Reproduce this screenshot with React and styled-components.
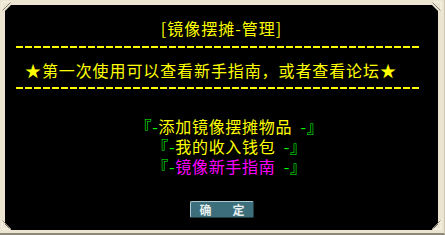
import React from "react";
import styled, { createGlobalStyle } from "styled-components";

const Global = createGlobalStyle`
  html, body { margin: 0; padding: 0; background: #e9e2ce; }
  #root { width: 445px; height: 235px; }
`;

const Frame = styled.div`
  position: relative;
  box-sizing: border-box;
  width: 445px;
  height: 235px;
  padding: 5px 6px 3px 5px;
  background: #ebe4d1;
  border-bottom: 2px solid #8c877a;
  border-right: 1px solid #cfc7b2;
`;

const Panel = styled.div`
  box-sizing: border-box;
  height: 100%;
  background: #000;
  display: flex;
  flex-direction: column;
  clip-path: polygon(6px 0, calc(100% - 6px) 0, 100% 6px, 100% calc(100% - 6px), calc(100% - 6px) 100%, 6px 100%, 0 calc(100% - 6px), 0 6px);
  font-family: "Noto Sans CJK SC", "Noto Sans", sans-serif;
  font-size: 16px;
  color: #ffff00;
`;

const Corner = styled.svg`
  position: absolute;
  width: 12px;
  height: 12px;
  ${(p) => (p.$top ? "top: 0;" : "bottom: 2px;")}
  ${(p) => (p.$left ? "left: 0;" : "right: 1px;")}
`;

const Title = styled.div`
  margin-top: 13px;
  height: 20px;
  line-height: 20px;
  text-align: center;
  letter-spacing: 1px;
`;

const Dashes = styled.div`
  margin: ${(p) => p.$mt}px 0 0 11px;
  width: 403px;
  height: 2px;
  background: repeating-linear-gradient(90deg, #ffff00 0 7px, transparent 7px 9px);
`;

const Notice = styled.div`
  margin-top: 12px;
  padding-left: 20px;
  height: 20px;
  line-height: 20px;
  letter-spacing: 0.9px;
  white-space: nowrap;
`;

const Menu = styled.div`
  margin-top: 27px;
  display: flex;
  flex-direction: column;
  align-items: center;
  padding-left: 16px;
`;

const MenuLine = styled.div`
  height: 20px;
  line-height: 20px;
  letter-spacing: 0.7px;
  white-space: pre;
  color: ${(p) => p.$color};
`;

const Mark = styled.span`
  color: #00ff00;
  padding-left: ${(p) => (p.$end ? 4 : 0)}px;
`;

const ButtonRow = styled.div`
  margin-top: 25px;
  display: flex;
  justify-content: center;
`;

const Button = styled.button`
  box-sizing: border-box;
  width: 64px;
  height: 17px;
  padding: 0 8px 0 9px;
  display: flex;
  justify-content: space-between;
  align-items: center;
  background: #3c6f7b;
  border: 1px solid #1e3c44;
  border-top-color: #a6cbd2;
  border-left-color: #a6cbd2;
  border-radius: 2px;
  color: #e6eeee;
  font-family: "Noto Sans CJK SC", sans-serif;
  font-size: 12px;
  font-weight: bold;
  line-height: 1;
  cursor: pointer;
`;

const items = [
  { text: "添加镜像摆摊物品", color: "#ffff00" },
  { text: "我的收入钱包", color: "#ffff00" },
  { text: "镜像新手指南", color: "#ff00ff" },
];

function CornerMark({ top, left }) {
  const rot = top ? (left ? 0 : 90) : left ? 270 : 180;
  return (
    <Corner $top={top} $left={left} viewBox="0 0 12 12">
      <g transform={`rotate(${rot} 6 6)`}>
        <path d="M2 11 L2 2 L11 2" fill="none" stroke="#f8f4e8" strokeWidth="1" />
        <path d="M2.5 10.5 L10.5 2.5" stroke="#8a8576" strokeWidth="1" />
      </g>
    </Corner>
  );
}

export default function App() {
  return (
    <>
      <Global />
      <Frame>
        <Panel>
          <Title>[镜像摆摊-管理]</Title>
          <Dashes $mt={8} />
          <Notice>★第一次使用可以查看新手指南，或者查看论坛★</Notice>
          <Dashes $mt={7} />
          <Menu>
            {items.map((it) => (
              <MenuLine key={it.text} $color={it.color}>
                <Mark>『-</Mark>
                {it.text}
                <Mark $end> -』</Mark>
              </MenuLine>
            ))}
          </Menu>
          <ButtonRow>
            <Button>
              <span>确</span>
              <span>定</span>
            </Button>
          </ButtonRow>
        </Panel>
        <CornerMark top left />
        <CornerMark top />
        <CornerMark left />
        <CornerMark />
      </Frame>
    </>
  );
}
